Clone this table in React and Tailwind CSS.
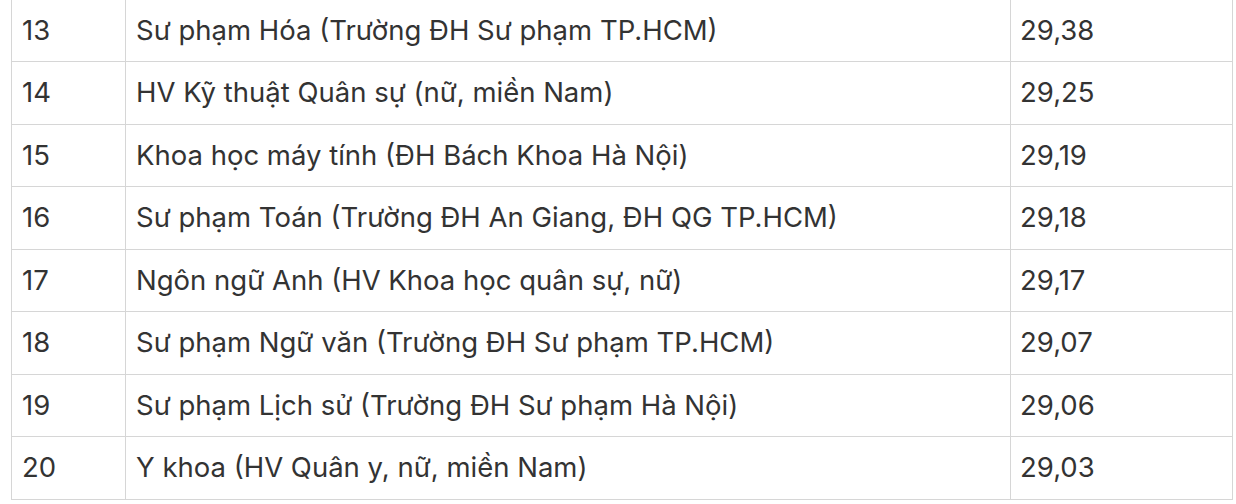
const rows = [
  ['13', 'Sư phạm Hóa (Trường ĐH Sư phạm TP.HCM)', '29,38'],
  ['14', 'HV Kỹ thuật Quân sự (nữ, miền Nam)', '29,25'],
  ['15', 'Khoa học máy tính (ĐH Bách Khoa Hà Nội)', '29,19'],
  ['16', 'Sư phạm Toán (Trường ĐH An Giang, ĐH QG TP.HCM)', '29,18'],
  ['17', 'Ngôn ngữ Anh (HV Khoa học quân sự, nữ)', '29,17'],
  ['18', 'Sư phạm Ngữ văn (Trường ĐH Sư phạm TP.HCM)', '29,07'],
  ['19', 'Sư phạm Lịch sử (Trường ĐH Sư phạm Hà Nội)', '29,06'],
  ['20', 'Y khoa (HV Quân y, nữ, miền Nam)', '29,03'],
];

export default function App() {
  return (
    <div className="w-[1236px] h-[504px] overflow-hidden bg-white">
      <table
        className="ml-[11px] mt-[-1.5px] w-[1222px] border-collapse table-fixed text-[#333333] text-[27.5px]"
        style={{ fontFamily: 'Inter, "Noto Sans", sans-serif' }}
      >
        <colgroup>
          <col className="w-[114px]" />
          <col className="w-[885px]" />
          <col />
        </colgroup>
        <tbody>
          {rows.map(([n, name, score]) => (
            <tr key={n} className="h-[62.5px]">
              <td className="border border-[#d6d6d6] px-[10px] align-middle">{n}</td>
              <td className="border border-[#d6d6d6] px-[10px] align-middle">{name}</td>
              <td className="border border-[#d6d6d6] px-[9px] align-middle">{score}</td>
            </tr>
          ))}
        </tbody>
      </table>
    </div>
  );
}
